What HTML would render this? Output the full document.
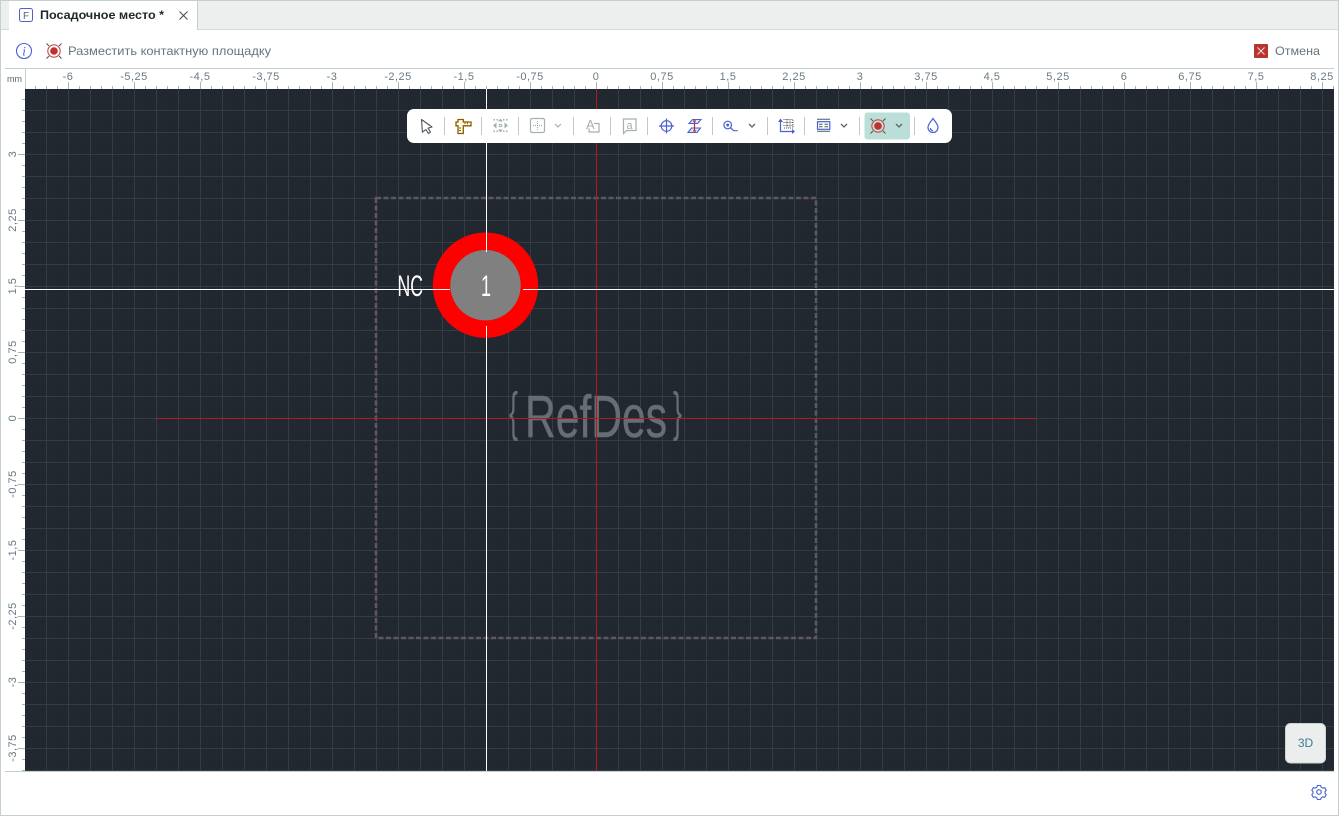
<!DOCTYPE html>
<html lang="ru"><head><meta charset="utf-8"><title>Посадочное место</title>
<style>
html,body{margin:0;padding:0;background:#fff;width:1339px;height:816px;overflow:hidden}
svg{display:block;position:absolute;left:0;top:0}
text{font-family:"Liberation Sans",sans-serif}
.rx text,.ry text{text-anchor:middle;font-size:11px;fill:#687983;letter-spacing:.5px}
.sep rect{fill:#bccac8}
.chev{fill:none;stroke:#5b6669;stroke-width:1.3}
.dis{fill:none;stroke:#a3afb0;stroke-width:1.2}
.blue{fill:none;stroke:#4a62d0;stroke-width:1.2}
</style></head><body>
<svg width="1339" height="816" viewBox="0 0 1339 816" xmlns="http://www.w3.org/2000/svg">
<defs>
<pattern id="dots" patternUnits="userSpaceOnUse" width="2.2" height="2.2">
  <rect x="0" y="0" width="1" height="1" fill="#4a5a6e" fill-opacity=".08"/>
</pattern>
<pattern id="grid" patternUnits="userSpaceOnUse" width="22" height="22">
  <rect x="2" y="0" width="1" height="22" fill="#363c44"/>
  <rect x="0" y="0" width="22" height="1" fill="#363c44"/>
</pattern>
<pattern id="tx" patternUnits="userSpaceOnUse" width="11" height="3" x="2" y="86">
  <rect x="0" y="0" width="1" height="3" fill="#aab5b6"/>
</pattern>
<pattern id="txl" patternUnits="userSpaceOnUse" width="66" height="7" x="68" y="82">
  <rect x="0" y="0" width="1" height="7" fill="#aab5b6"/>
</pattern>
<pattern id="ty" patternUnits="userSpaceOnUse" width="3" height="11" x="22" y="0">
  <rect x="0" y="0" width="3" height="1" fill="#aab5b6"/>
</pattern>
<pattern id="tyl" patternUnits="userSpaceOnUse" width="7" height="66" x="18" y="22">
  <rect x="0" y="0" width="7" height="1" fill="#aab5b6"/>
</pattern>
</defs>

<!-- frame and tab bar -->
<rect x="0" y="0" width="1339" height="29" fill="#ecefee"/>
<rect x="0" y="0" width="1339" height="1" fill="#c5d0ce"/>
<rect x="0" y="29" width="1339" height="1" fill="#d3dbda"/>
<rect x="9" y="1" width="188" height="29" fill="#fff"/>
<rect x="197" y="1" width="1" height="29" fill="#c5d0ce"/>
<rect x="0" y="0" width="1" height="816" fill="#c5d0ce"/>
<rect x="1338" y="0" width="1" height="816" fill="#c5d0ce"/>
<rect x="0" y="815" width="1339" height="1" fill="#c5d0ce"/>

<rect x="19.5" y="8.5" width="13" height="13" rx="2" fill="none" stroke="#4a62d0" stroke-width="1"/>
<text x="26" y="19" font-size="10" fill="#5a6468" text-anchor="middle">F</text>
<text x="40" y="19" font-size="12" font-weight="700" fill="#1f272c" textLength="124" lengthAdjust="spacingAndGlyphs">Посадочное место *</text>
<path d="M179.5 11.5l8 8M187.5 11.5l-8 8" stroke="#4a5357" stroke-width="1.1" fill="none"/>

<!-- command bar -->
<circle cx="24" cy="51" r="7.5" fill="none" stroke="#4a62d0" stroke-width="1.1"/>
<text x="24" y="55.5" font-size="13" fill="#4a62d0" text-anchor="middle" style="font-family:'Liberation Serif',serif;font-style:italic">i</text>
<g transform="translate(54 51)">
  <circle r="6.2" fill="none" stroke="#c94a42" stroke-width="1.1"/><circle r="3.8" fill="#c0322e"/>
  <path d="M-7.500-7.500l2.500 2.500M7.500-7.500l-2.500 2.500M-7.500 7.500l2.500-2.500M7.500 7.500l-2.500-2.500" stroke="#4a5357" stroke-width="1"/>
</g>
<text x="68" y="55" font-size="12" fill="#65747c" textLength="203" lengthAdjust="spacingAndGlyphs">Разместить контактную площадку</text>
<rect x="1254" y="44" width="14" height="14" fill="#b73431" rx="1"/>
<path d="M1257.500 47.500l7 7M1264.500 47.500l-7 7" stroke="#f3d9d8" stroke-width="1.1"/>
<text x="1275" y="55" font-size="12" fill="#65747c" textLength="45" lengthAdjust="spacingAndGlyphs">Отмена</text>

<!-- rulers -->
<rect x="5" y="68" width="1329" height="1" fill="#c5d0ce"/>
<rect x="25" y="69" width="1" height="20" fill="#c5d0ce"/>
<text x="7" y="82" font-size="9.5" fill="#5d6b72" textLength="15" lengthAdjust="spacingAndGlyphs">mm</text>
<rect x="26" y="86" width="1308" height="3" fill="url(#tx)"/>
<rect x="26" y="82" width="1308" height="7" fill="url(#txl)"/>
<rect x="22" y="89" width="3" height="682" fill="url(#ty)"/>
<rect x="18" y="89" width="7" height="682" fill="url(#tyl)"/>
<g class="rx">
<text x="68" y="80">-6</text><text x="134" y="80">-5,25</text><text x="200" y="80">-4,5</text><text x="266" y="80">-3,75</text><text x="332" y="80">-3</text><text x="398" y="80">-2,25</text><text x="464" y="80">-1,5</text><text x="530" y="80">-0,75</text><text x="596" y="80">0</text><text x="662" y="80">0,75</text><text x="728" y="80">1,5</text><text x="794" y="80">2,25</text><text x="860" y="80">3</text><text x="926" y="80">3,75</text><text x="992" y="80">4,5</text><text x="1058" y="80">5,25</text><text x="1124" y="80">6</text><text x="1190" y="80">6,75</text><text x="1256" y="80">7,5</text><text x="1322" y="80">8,25</text>
</g>
<g class="ry">
<text transform="translate(16 154) rotate(-90)">3</text>
<text transform="translate(16 220) rotate(-90)">2,25</text>
<text transform="translate(16 286) rotate(-90)">1,5</text>
<text transform="translate(16 352) rotate(-90)">0,75</text>
<text transform="translate(16 418) rotate(-90)">0</text>
<text transform="translate(16 484) rotate(-90)">-0,75</text>
<text transform="translate(16 550) rotate(-90)">-1,5</text>
<text transform="translate(16 616) rotate(-90)">-2,25</text>
<text transform="translate(16 682) rotate(-90)">-3</text>
<text transform="translate(16 748) rotate(-90)">-3,75</text>
</g>

<!-- canvas -->
<rect x="25" y="89" width="1309" height="682" fill="#21272f"/>
<rect x="25" y="89" width="1309" height="682" fill="url(#dots)"/>
<rect x="25" y="89" width="1309" height="682" fill="url(#grid)"/>
<rect x="5" y="771" width="1329" height="1" fill="#c5d0ce"/>

<!-- courtyard -->
<rect x="376" y="198" width="440" height="440" fill="none" stroke="#5f5661" stroke-width="2.6" stroke-dasharray="5 2.5"/>

<!-- ref des -->
<text x="525" y="437" font-size="59" fill="#666d75" stroke="#666d75" stroke-width=".5" textLength="142" lengthAdjust="spacingAndGlyphs">RefDes</text>
<text x="509" y="430" font-size="54" fill="#666d75" textLength="9" lengthAdjust="spacingAndGlyphs">{</text>
<text x="673" y="430" font-size="54" fill="#666d75" textLength="9" lengthAdjust="spacingAndGlyphs">}</text>

<!-- origin -->
<rect x="156" y="418" width="880" height="1" fill="#b01c1e"/>
<rect x="596" y="89" width="1" height="682" fill="#b01c1e"/>

<!-- pad -->
<circle cx="485.5" cy="285.2" r="52.7" fill="#ff0000"/>
<circle cx="485.5" cy="285.2" r="35.2" fill="#808080"/>
<rect x="486" y="89" width="1" height="163" fill="#fff"/>
<rect x="486" y="326" width="1" height="445" fill="#fff"/>
<rect x="25" y="289" width="425" height="1" fill="#fff"/>
<rect x="523" y="289" width="811" height="1" fill="#fff"/>
<text x="397.5" y="296" font-size="30" fill="#fff" textLength="25.5" lengthAdjust="spacingAndGlyphs">NC</text>
<text x="481" y="296" font-size="30" fill="#fff" textLength="10" lengthAdjust="spacingAndGlyphs">1</text>

<!-- toolbar -->
<rect x="407" y="109" width="545" height="34" rx="7" fill="#fff"/>
<rect x="864.5" y="112.5" width="45.5" height="27" rx="3" fill="#bcded8"/>
<g class="sep">
<rect x="444" y="117" width="1" height="18"/><rect x="481" y="117" width="1" height="18"/><rect x="518" y="117" width="1" height="18"/><rect x="573" y="117" width="1" height="18"/><rect x="610" y="117" width="1" height="18"/><rect x="647" y="117" width="1" height="18"/><rect x="712" y="117" width="1" height="18"/><rect x="767" y="117" width="1" height="18"/><rect x="804" y="117" width="1" height="18"/><rect x="859" y="117" width="1" height="18"/><rect x="914" y="117" width="1" height="18"/>
</g>
<!-- cursor -->
<path d="M421.5 119.5l10.5 7.5-4 1.2 2.5 4-2.2 1.3-2.4-4-3.5 2.7z" fill="#fff" stroke="#4f585c" stroke-width="1.1" stroke-linejoin="round"/>
<!-- ruler -->
<path d="M458 119.500h5.300v2.500h7.700v3.800h-7.700v7.700h-5.300v-7.700h-2v-3.800h2z" fill="#fffbe8" stroke="#8a5c00" stroke-width="1.300"/>
<path d="M465 122.500v1.800M467.500 122.500v1.800M459 128h2M459 130.500h2" stroke="#8a5c00" stroke-width=".9"/>
<!-- move -->
<g fill="#a3afb0">
<rect x="493.5" y="119" width="1.5" height="1.5"/><rect x="496.5" y="119" width="1.5" height="1.5"/><rect x="503" y="119" width="1.5" height="1.5"/><rect x="506" y="119" width="1.5" height="1.5"/>
<rect x="493.5" y="130.5" width="1.5" height="1.5"/><rect x="496.5" y="130.5" width="1.5" height="1.5"/><rect x="503" y="130.5" width="1.5" height="1.5"/><rect x="506" y="130.5" width="1.5" height="1.5"/>
<path d="M500.5 118.500l2.500 3h-5zM500.5 132.500l2.500-3h-5zM493 125.500l3.500-3v6zM508 125.500l-3.500-3v6z"/>
</g>
<circle cx="500.5" cy="125.5" r="1.3" fill="none" stroke="#a3afb0"/>
<!-- grid disabled -->
<rect x="530.5" y="118.5" width="14" height="14" rx="1.5" class="dis"/>
<path d="M537.5 121v9M533 125.5h9" class="dis" stroke-dasharray="1 1"/>
<path d="M555 124l3 3 3-3" fill="none" stroke="#a3afb0" stroke-width="1.2"/>
<!-- text disabled -->
<text x="586" y="129" font-size="13" fill="#a3afb0">A</text>
<path d="M594 123.500h5v8.500h-10v-3.500" class="dis"/>
<!-- comment disabled -->
<path d="M623.500 119h12.500v11.500h-9.500l-3 3z" class="dis"/>
<text x="629.500" y="129" font-size="11" fill="#a3afb0" text-anchor="middle">a</text>
<!-- target -->
<circle cx="666.500" cy="126" r="5.300" class="blue"/>
<path d="M666.500 118.500v15M659 126h15" class="blue"/>
<!-- layers -->
<path d="M689 123.500l3.500-4h8.500l-3.500 4zM688 132.500l3.500-4.500h9l-3.500 4.500z" fill="#dfe4f8" stroke="#4a62d0" stroke-width="1.100"/>
<path d="M694.500 121v10M693 121h3M693 131h3" stroke="#c0322e" stroke-width="1.200" fill="none"/>
<!-- net zoom -->
<circle cx="727.700" cy="125" r="3.800" class="blue"/>
<circle cx="727.700" cy="125" r="1.500" fill="#4a62d0"/>
<path d="M730.700 128l3 2.700h4" class="blue"/>
<path class="chev" d="M749 124l3 3 3-3"/>
<!-- crop -->
<path d="M780.500 120.500v11h12" class="blue" stroke-width="1.400"/>
<path d="M778 122l2.500-3.500 2.500 3.500zM792 129l3 2.500-3 2.500z" fill="#4a62d0"/>
<path d="M783.500 119.500h9.500v8.500h-9.500M783.500 122.500h9.500M783.500 125.500h9.500M787 119.500v8.500M790 119.500v8.500" fill="none" stroke="#4f585c" stroke-width="1" stroke-dasharray="1 1"/>
<!-- list -->
<rect x="817.500" y="121.700" width="12.300" height="7.600" class="blue" stroke-width="1.300"/>
<path d="M817 119.300h13M817 131.300h13M819 124.300h3.500M824.500 124.300h3.500M819 126.800h3.500M824.500 126.800h3.500" stroke="#4f585c" stroke-width="1" fill="none"/>
<path class="chev" d="M841 124l3 3 3-3"/>
<!-- pad active -->
<g transform="translate(878 126)">
  <circle r="6.200" fill="none" stroke="#c94a42" stroke-width="1.100"/><circle r="3.800" fill="#c0322e"/>
  <path d="M-7.500-7.500l2.500 2.500M7.500-7.500l-2.500 2.500M-7.500 7.500l2.500-2.500M7.500 7.500l-2.500-2.500" stroke="#4a5357" stroke-width="1"/>
</g>
<path class="chev" d="M896 124l3 3 3-3"/>
<!-- drop -->
<path d="M933 118.500c2 3 5 5.800 5 9a5 5 0 0 1-10 0c0-3.200 3-6 5-9z" class="blue" stroke-width="1.200"/>
<path d="M930.500 128c0 1.500 1 2.500 2.500 2.800" class="blue" stroke-width="1"/>

<!-- 3D button -->
<rect x="1285.500" y="723.500" width="40" height="39.500" rx="5" fill="#ebeeed" stroke="#ccd4d3"/>
<text x="1305.500" y="747" font-size="12" fill="#3a7f96" text-anchor="middle">3D</text>

<!-- gear -->
<g transform="translate(1319 792)" fill="none" stroke="#4a62d0" stroke-width="1.100">
  <circle r="2.300"/>
  <path d="M-1.600-6.500h3.200l.6 1.700 1.700.9 1.800-.5 1.500 2.700-1.200 1.300v1.800l1.200 1.300-1.500 2.700-1.800-.5-1.700.9-.6 1.700h-3.200l-.6-1.700-1.700-.9-1.800.5-1.500-2.700 1.200-1.300v-1.800l-1.200-1.300 1.500-2.700 1.800.5 1.700-.9z"/>
</g>
</svg>
</body></html>
